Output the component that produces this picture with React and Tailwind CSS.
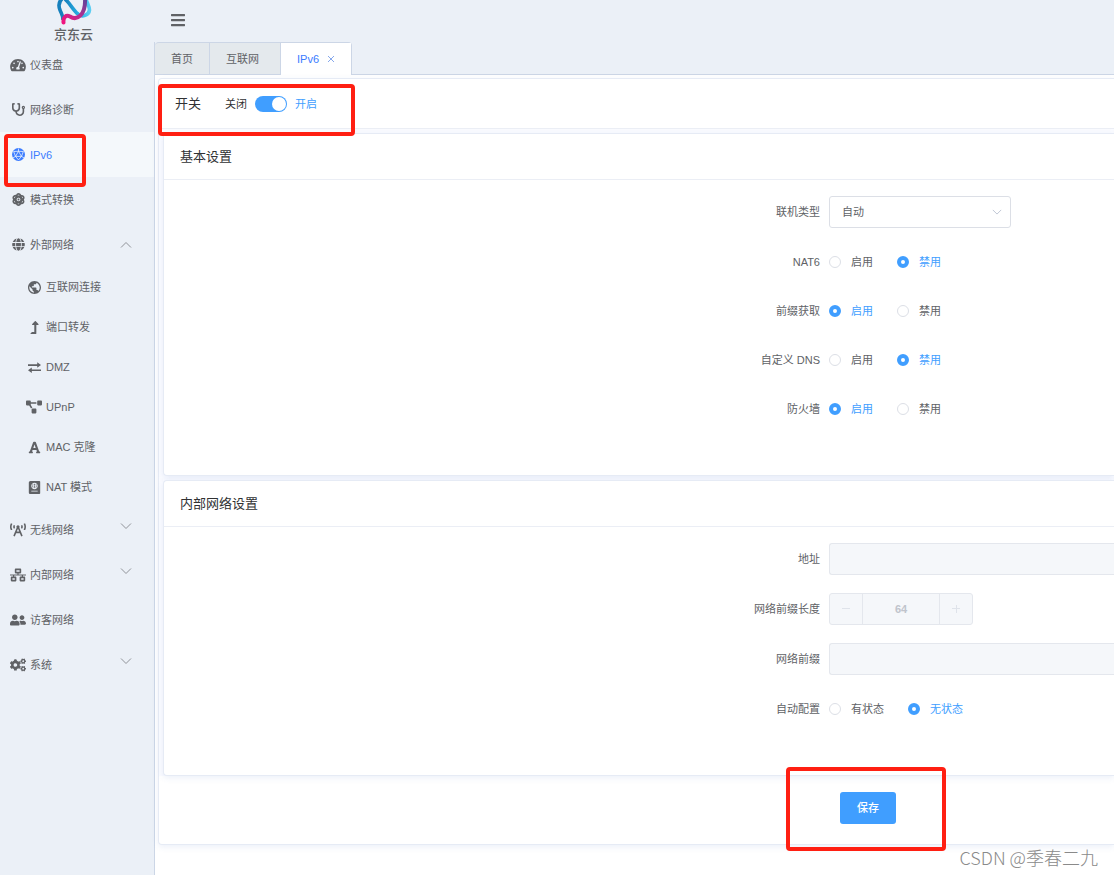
import React, { useState } from "react";
import {
  FaTachometerAlt,
  FaStethoscope,
  FaGlobe,
  FaLevelUpAlt,
  FaProjectDiagram,
  FaFont,
  FaPassport,
  FaBroadcastTower,
  FaNetworkWired,
  FaUserFriends,
  FaCogs,
  FaBars,
} from "react-icons/fa";

function PolyGlobe({ className }) {
  return (
    <svg viewBox="0 0 24 24" className={className} aria-hidden="true">
      <circle cx="12" cy="12" r="12" fill="currentColor" />
      <g fill="none" stroke="#f5f8fb" strokeWidth="1.400">
        <path d="M12 6 17.500 15.500H6.500Z" />
        <path d="M12 1V6M6.500 15.500 2 18M17.500 15.500 22 18M12 6 3 6.500 6.500 15.500 12 22 17.500 15.500 21 6.500Z" />
      </g>
    </svg>
  );
}

function AtomGear({ className }) {
  return (
    <svg viewBox="0 0 24 24" className={className} fill="none" stroke="currentColor" aria-hidden="true">
      <g strokeWidth="3.200">
        <ellipse cx="12" cy="12" rx="5" ry="10.400" />
        <ellipse cx="12" cy="12" rx="5" ry="10.400" transform="rotate(60 12 12)" />
        <ellipse cx="12" cy="12" rx="5" ry="10.400" transform="rotate(120 12 12)" />
      </g>
      <circle cx="12" cy="12" r="1.800" fill="currentColor" stroke="none" />
    </svg>
  );
}

function Earth({ className }) {
  return (
    <svg viewBox="2 2 20 20" className={className} fill="currentColor" aria-hidden="true">
      <path d="M12 2C6.480 2 2 6.480 2 12s4.480 10 10 10 10-4.480 10-10S17.520 2 12 2zm-1 17.930c-3.950-.490-7-3.850-7-7.930 0-.620.080-1.210.210-1.790L9 15v1c0 1.100.900 2 2 2v1.930zm6.900-2.540c-.260-.810-1-1.390-1.900-1.390h-1v-3c0-.550-.450-1-1-1H8v-2h2c.550 0 1-.450 1-1V7h2c1.100 0 2-.900 2-2v-.410c2.930 1.190 5 4.060 5 7.410 0 2.080-.800 3.970-2.100 5.390z" />
    </svg>
  );
}

function SwapArrows({ className }) {
  return (
    <svg viewBox="0 0 24 24" className={className} fill="none" stroke="currentColor" strokeWidth="3" aria-hidden="true">
      <path d="M0 7.500H19M24 17H5" />
      <path d="M17 2.500 24 7.500 17 12.500ZM7 12 0 17 7 22Z" fill="currentColor" stroke="none" />
    </svg>
  );
}

function Chevron({ up, className }) {
  return (
    <svg viewBox="0 0 12 12" className={className} fill="none" stroke="currentColor" aria-hidden="true">
      <path d={up ? "M1 8.500 6 3.500 11 8.500" : "M1 3.500 6 8.500 11 3.500"} />
    </svg>
  );
}

function Logo() {
  return (
    <svg viewBox="0 0 38 27" className="h-[27px] w-[38px]" fill="none" aria-hidden="true">
      <defs>
        <linearGradient id="ring" x1="0" y1="0" x2="1" y2="0">
          <stop offset="0" stopColor="#1680bd" />
          <stop offset=".6" stopColor="#27b4e8" />
          <stop offset="1" stopColor="#5ccdf2" />
        </linearGradient>
        <linearGradient id="ribbon" x1="0" y1="1" x2="1" y2="0">
          <stop offset="0" stopColor="#f0147f" />
          <stop offset=".5" stopColor="#b92c8e" />
          <stop offset="1" stopColor="#5b479c" />
        </linearGradient>
      </defs>
      <path d="M10-1C14 2 18 10 23 14C27 18 34 15 34.500 10C34.500 6 32 3 31-1" stroke="url(#ring)" strokeWidth="3.600" />
      <path d="M8-2C4 1 3 5 5 10C6 13 8 15 8 20" stroke="#1680bd" strokeWidth="3.600" />
      <path d="M8.500 22.500C8 17 11 14.500 15 16.500C22 21 31 15 30-2" stroke="url(#ribbon)" strokeWidth="4" strokeLinecap="round" />
    </svg>
  );
}

const links = [
  { label: "仪表盘", icon: FaTachometerAlt },
  { label: "网络诊断", icon: FaStethoscope },
  { label: "IPv6", icon: PolyGlobe, active: true },
  { label: "模式转换", icon: AtomGear },
  {
    label: "外部网络",
    icon: FaGlobe,
    children: [
      { label: "互联网连接", icon: Earth },
      { label: "端口转发", icon: FaLevelUpAlt },
      { label: "DMZ", icon: SwapArrows },
      { label: "UPnP", icon: FaProjectDiagram },
      { label: "MAC 克隆", icon: FaFont },
      { label: "NAT 模式", icon: FaPassport },
    ],
  },
  { label: "无线网络", icon: FaBroadcastTower, closed: true },
  { label: "内部网络", icon: FaNetworkWired, closed: true },
  { label: "访客网络", icon: FaUserFriends },
  { label: "系统", icon: FaCogs, closed: true },
];

const wideIcons = [FaBroadcastTower, FaNetworkWired, FaUserFriends, FaCogs, FaProjectDiagram, FaTachometerAlt];

function ItemIcon({ icon: Icon }) {
  return (
    <span className="flex w-4 shrink-0 justify-center">
      <Icon className={wideIcons.includes(Icon) ? "h-[14px] w-4 shrink-0" : "size-[13px] shrink-0"} />
    </span>
  );
}

function MenuItem({ item }) {
  const row = "flex h-[45px] w-full items-center gap-1 pl-[10px] pr-[22px] text-left";
  const body = (
    <>
      <ItemIcon icon={item.icon} />
      <span className="grow">{item.label}</span>
    </>
  );
  if (item.children) {
    return (
      <li>
        <button type="button" aria-expanded="true" className={row}>
          {body}
          <Chevron up className="size-3 text-[#909399]" />
        </button>
        <ul>
          {item.children.map((child) => (
            <li key={child.label}>
              <a href="#" className="flex h-10 items-center gap-1 pl-[26px]">
                <ItemIcon icon={child.icon} />
                <span>{child.label}</span>
              </a>
            </li>
          ))}
        </ul>
      </li>
    );
  }
  if (item.closed) {
    return (
      <li>
        <button type="button" aria-expanded="false" className={row}>
          {body}
          <Chevron className="mb-2 size-3 text-[#909399]" />
        </button>
      </li>
    );
  }
  return (
    <li>
      <a href="#" className={item.active ? row + " bg-[#f4f8fb] text-[#3b7cff]" : row}>
        {body}
      </a>
    </li>
  );
}

function FormRow({ label, htmlFor, children }) {
  return (
    <div className="flex min-h-8 items-center gap-[9px]">
      <label htmlFor={htmlFor} className="w-[656px] shrink-0 text-right">
        {label}
      </label>
      {children}
    </div>
  );
}

function RadioRow({ label, name, options, initial }) {
  const [value, setValue] = useState(initial);
  return (
    <div role="radiogroup" aria-label={label} className="flex h-[31px] items-center gap-[9px]">
      <span className="w-[656px] shrink-0 text-right">{label}</span>
      <div className="flex gap-6">
        {options.map((option) => (
          <label key={option} className="flex items-center gap-[10px] has-checked:text-[#409eff]">
            <input
              type="radio"
              name={name}
              checked={value === option}
              onChange={() => setValue(option)}
              className="size-3 appearance-none rounded-full border border-[#dcdfe6] bg-white checked:border-4 checked:border-[#409eff]"
            />
            {option}
          </label>
        ))}
      </div>
    </div>
  );
}

function Section({ title, children }) {
  return (
    <section className="rounded-l border border-r-0 border-[#e6ebf5] bg-white shadow-[0_2px_6px_rgba(64,110,200,0.10)]">
      <h2 className="flex h-[46px] items-center border-b border-[#ebeef5] px-4 text-[13px] text-[#303133]">{title}</h2>
      <div className="flex flex-col gap-[18px] pt-4 pb-[51px]">{children}</div>
    </section>
  );
}

function Highlight({ className }) {
  return <div aria-hidden="true" className={"pointer-events-none absolute rounded-[4px] border-4 border-[#ff1f12] " + className} />;
}

export default function App() {
  const [on, setOn] = useState(true);
  return (
    <div className="relative flex min-h-screen overflow-hidden bg-[#ebf0f7] font-['Liberation_Sans','Noto_Sans_CJK_SC',sans-serif] text-[11px] leading-4 text-[#606266]">
      <aside className="w-[154px] shrink-0">
        <div className="flex h-[42px] flex-col items-center pr-[7px]">
          <Logo />
          <span className="text-[13px] leading-[15px] font-medium">京东云</span>
        </div>
        <nav>
          <ul>
            {links.map((item) => (
              <MenuItem key={item.label} item={item} />
            ))}
          </ul>
        </nav>
      </aside>

      <div className="flex min-w-0 grow flex-col">
        <header className="flex h-[42px] items-start pl-4">
          <button type="button" aria-label="菜单" className="flex h-10 items-center">
            <FaBars className="size-4" />
          </button>
        </header>
        <div className="flex h-[33px] border-b border-l border-[#ccd6e6]">
          <div className="-mb-px flex h-[33px] rounded-t border-t border-r border-[#ccd6e6] bg-[#e4e9ed]">
            <a href="#" className="flex items-center border-b border-[#ccd6e6] px-4">首页</a>
            <a href="#" className="flex items-center border-b border-l border-[#ccd6e6] pr-[21px] pl-4">互联网</a>
            <div className="flex items-center gap-2 border-l border-[#ccd6e6] bg-white px-4 text-[#3b7cff]">
              <a href="#">IPv6</a>
              <button type="button" aria-label="关闭标签" className="flex">
                <svg viewBox="0 0 8 8" className="size-2" fill="none" stroke="#86a8ec">
                  <path d="M1 1 7 7M7 1 1 7" />
                </svg>
              </button>
            </div>
          </div>
        </div>

        <main className="grow border-l border-[#ccd6e6] bg-white pt-[3px] pl-[3px]">
          <div className="rounded-l border border-r-0 border-[#e6ebf5] bg-white shadow-[0_2px_6px_rgba(64,110,200,0.10)]">
            <div className="flex h-[50px] items-center border-b border-[#ebeef5] px-4 text-[#303133]">
              <h1 className="w-[50px] text-[13px]">开关</h1>
              <div className="flex items-center gap-2">
                <span>关闭</span>
                <input
                  type="checkbox"
                  role="switch"
                  aria-label="开关"
                  checked={on}
                  onChange={() => setOn(!on)}
                  className="flex h-4 w-8 appearance-none items-center rounded-full bg-[#c0ccda] px-px before:size-[14px] before:rounded-full before:bg-white checked:justify-end checked:bg-[#409eff]"
                />
                <span className="text-[#409eff]">开启</span>
              </div>
            </div>
            <div className="flex flex-col gap-1 bg-[#fafbff] pt-1 pl-1">
              <Section title="基本设置">
                <FormRow label="联机类型" htmlFor="type">
                  <div className="relative flex w-[182px] items-center">
                    <select id="type" className="h-8 w-full appearance-none rounded-[3px] border border-[#dcdfe6] bg-white px-3">
                      <option>自动</option>
                    </select>
                    <Chevron className="pointer-events-none absolute right-[9px] size-[10px] text-[#b4bccc]" />
                  </div>
                </FormRow>
                <RadioRow label="NAT6" name="nat6" options={["启用", "禁用"]} initial="禁用" />
                <RadioRow label="前缀获取" name="prefix" options={["启用", "禁用"]} initial="启用" />
                <RadioRow label="自定义 DNS" name="dns" options={["启用", "禁用"]} initial="禁用" />
                <RadioRow label="防火墙" name="firewall" options={["启用", "禁用"]} initial="启用" />
              </Section>
              <Section title="内部网络设置">
                <FormRow label="地址" htmlFor="address">
                  <input id="address" disabled className="h-8 min-w-0 grow rounded-l-[3px] border border-r-0 border-[#e4e7ed] bg-[#f5f7fa] px-3" />
                </FormRow>
                <FormRow label="网络前缀长度" htmlFor="length">
                  <div className="flex h-8 w-36 overflow-hidden rounded-[3px] border border-[#e4e7ed] bg-[#f5f7fa] text-[#c0c4cc]">
                    <button type="button" disabled aria-label="减少" className="flex w-8 shrink-0 items-center justify-center">
                      <svg viewBox="0 0 8 8" className="size-2" fill="none" stroke="#dfe3ea">
                        <path d="M0 3.500H8" />
                      </svg>
                    </button>
                    <input id="length" disabled defaultValue="64" className="min-w-0 grow border-x border-[#e4e7ed] text-center font-bold" />
                    <button type="button" disabled aria-label="增加" className="flex w-8 shrink-0 items-center justify-center">
                      <svg viewBox="0 0 8 8" className="size-2" fill="none" stroke="#dfe3ea">
                        <path d="M0 3.500H8M4.500 0V8" />
                      </svg>
                    </button>
                  </div>
                </FormRow>
                <FormRow label="网络前缀" htmlFor="netprefix">
                  <input id="netprefix" disabled className="h-8 min-w-0 grow rounded-l-[3px] border border-r-0 border-[#e4e7ed] bg-[#f5f7fa] px-3" />
                </FormRow>
                <RadioRow label="自动配置" name="auto" options={["有状态", "无状态"]} initial="无状态" />
              </Section>
            </div>
            <div className="flex px-4 pt-4 pb-5 pl-[681px]">
              <button type="button" className="h-8 w-14 rounded-[3px] bg-[#409eff] font-medium text-white">保存</button>
            </div>
          </div>
        </main>
      </div>

      <Highlight className="top-[134px] left-1 h-[53px] w-[82px]" />
      <Highlight className="top-[84px] left-[158px] h-[52px] w-[197px]" />
      <Highlight className="top-[767px] left-[786px] h-[84px] w-40" />
      <div className="absolute right-4 bottom-2 font-['Noto_Sans_CJK_SC',sans-serif] text-[18px] leading-5 font-light text-[#8a8a8a]">CSDN @季春二九</div>
    </div>
  );
}
